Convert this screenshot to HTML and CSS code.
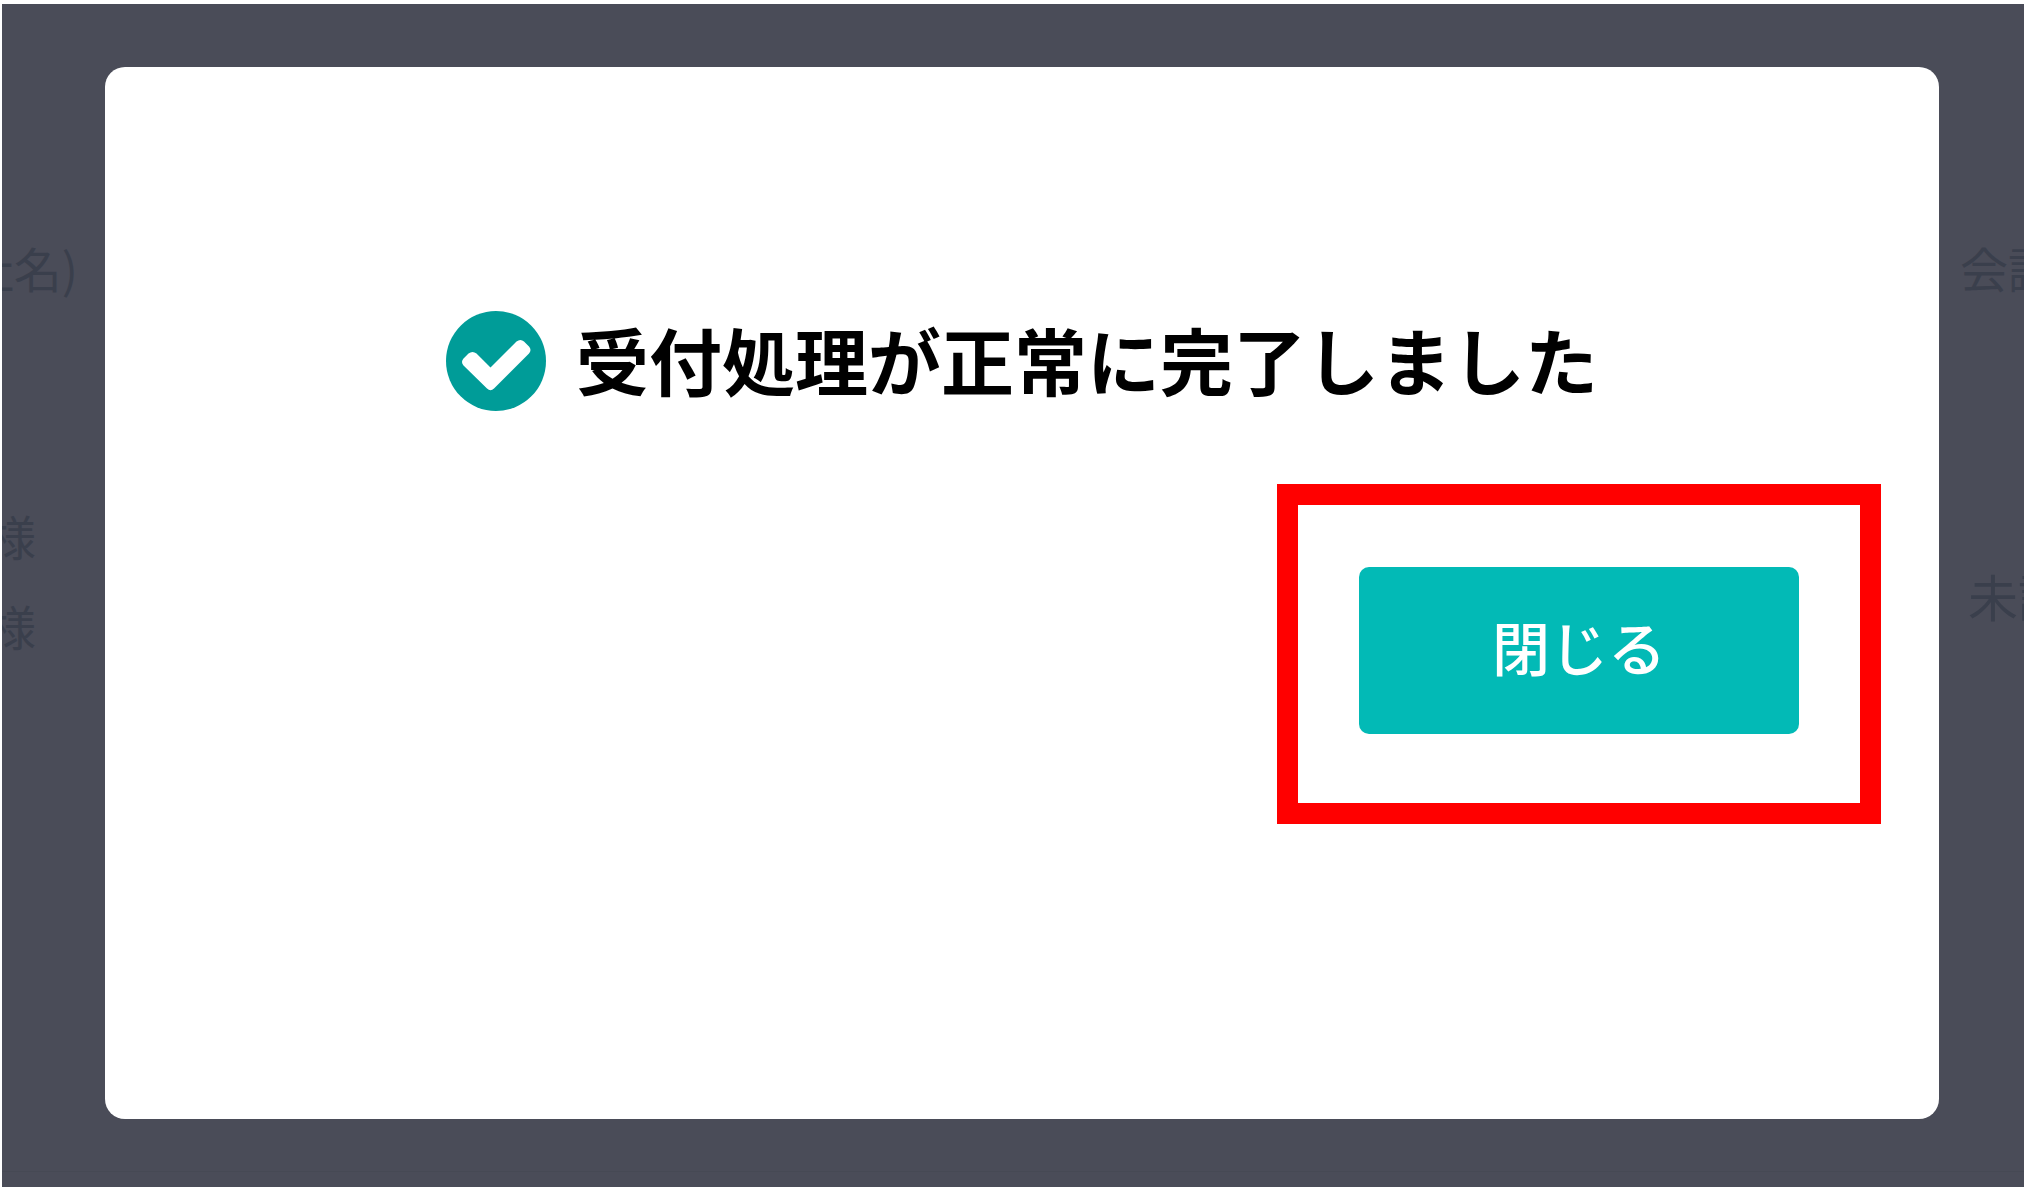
FILE: index.html
```html
<!DOCTYPE html>
<html lang="ja">
<head>
<meta charset="utf-8">
<title>受付完了</title>
<link rel="stylesheet" href="styles.css">
</head>
<body>
<div class="screen">
  <div class="side side-left">
    <p class="label label-head">社名)</p>
    <p class="label">様</p>
    <p class="label">様</p>
  </div>
  <main class="dialog" role="dialog" aria-labelledby="message">
    <div class="status">
      <svg class="status-icon" viewBox="0 0 100 100" aria-hidden="true">
        <circle cx="50" cy="50" r="50" fill="#009c98"/>
        <path d="M17.500 47.500 L22.500 42.500 Q26.500 39.500 30.500 42.500 L44.500 56.500 L70.500 30.500 Q74.500 27.500 78 30.500 L83 35.500 Q86 39 83 42.500 L48 77.500 Q44.500 81 41 77.500 L17.500 54.500 Q14.500 51 17.500 47.500 Z" fill="#fff"/>
      </svg>
      <h1 class="message" id="message">受付処理が正常に完了しました</h1>
    </div>
    <div class="highlight">
      <button class="close" type="button">閉じる</button>
    </div>
  </main>
  <div class="side side-right">
    <p class="label label-head">会議</p>
    <p class="label label-state">未訪</p>
  </div>
</div>
</body>
</html>
```

FILE: styles.css
```css
* {
  box-sizing: border-box;
}

body {
  display: flex;
  min-height: 100vh;
  margin: 0;
  padding: 4px 1px 4px 2px;
  background: #fff;
  color: #000;
  font-family: "Noto Sans CJK JP", sans-serif;
}

.screen {
  flex: 1;
  display: grid;
  grid-template-columns: 103px minmax(0, 1fr) 85px;
  background: linear-gradient(#464954, #464954) 0 calc(100% - 15px) / 100% 1px no-repeat #4a4c58;
}

.side {
  display: flex;
  flex-direction: column;
  padding-top: 218px;
  overflow: hidden;
}

.side-left {
  align-items: flex-end;
  padding-right: 69px;
}

.side-right {
  align-items: flex-start;
  padding-left: 21px;
}

.label {
  flex: none;
  margin: 0;
  color: #3a3f4c;
  font-size: 48px;
  font-weight: 400;
  line-height: 90px;
  white-space: nowrap;
}

.label-head {
  margin-bottom: 178px;
}

.side-left .label-head {
  margin-right: -42px;
}

.label-state {
  margin-top: 60px;
  padding-left: 8px;
  font-size: 50px;
}

.dialog {
  margin: 63px 0 68px;
  padding: 244px 58px 60px;
  border-radius: 20px;
  background: #fff;
}

.status {
  display: flex;
  justify-content: center;
  align-items: center;
  gap: 30px;
  margin-bottom: 73px;
}

.status-icon {
  flex: none;
  width: 100px;
  height: 100px;
}

.message {
  margin: 0;
  padding-bottom: 6px;
  font-size: 73px;
  font-weight: 700;
  line-height: 94px;
}

.highlight {
  width: fit-content;
  margin-left: auto;
  padding: 62px 61px 69px;
  border: 21px solid #f00;
}

.close {
  display: block;
  width: 440px;
  height: 167px;
  padding: 0 0 10px;
  border: 0;
  border-radius: 10px;
  background: #02bab6;
  color: #fff;
  font-family: inherit;
  font-size: 58px;
  font-weight: 500;
  line-height: 80px;
}
```
